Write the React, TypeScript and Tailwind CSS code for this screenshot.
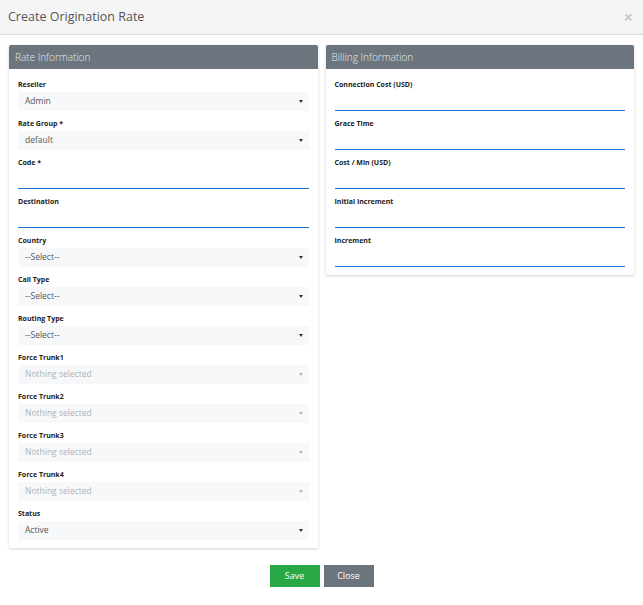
import React from "react";

const font = { fontFamily: '"Open Sans", "DejaVu Sans", sans-serif' };

function Caret({ light }: { light?: boolean }) {
  return (
    <span
      className={`inline-block w-0 h-0 border-l-[2.5px] border-r-[2.5px] border-t-[3px] border-l-transparent border-r-transparent ${
        light ? "border-t-[#b5b5b5]" : "border-t-[#333]"
      }`}
    />
  );
}

function SelectField({ label, value, disabled }: { label: string; value: string; disabled?: boolean }) {
  return (
    <div className="flex flex-col">
      <div className="h-[8px] flex items-center text-[7px] font-bold text-[#222] leading-none whitespace-nowrap">{label}</div>
      <div className="mt-[4px] h-[19px] bg-[#f7f8fa] flex items-center justify-between pl-[7px] pr-[6px]">
        <span className={`text-[8.5px] leading-none ${disabled ? "text-[#aeb3b9]" : "text-[#555]"}`}>{value}</span>
        <Caret light={disabled} />
      </div>
    </div>
  );
}

function InputField({ label }: { label: string }) {
  return (
    <div className="flex flex-col">
      <div className="h-[8px] flex items-center text-[7px] font-bold text-[#222] leading-none whitespace-nowrap">{label}</div>
      <div className="mt-[4px] h-[19px] border-b border-[#1e76d2]" />
    </div>
  );
}

function Panel({ title, children }: { title: string; children: React.ReactNode }) {
  return (
    <div className="bg-white rounded-[2px] shadow-[0_1px_3px_rgba(0,0,0,0.18)]">
      <div className="h-[24px] bg-[#6c757d] flex items-center px-[6px] text-[10px] font-light text-[#e6e8ea] rounded-t-[2px]">
        {title}
      </div>
      <div className="px-[9px] pt-[11px] pb-[8px] flex flex-col gap-[8px]">{children}</div>
    </div>
  );
}

export default function App() {
  return (
    <div className="w-[643px] h-[605px] bg-white" style={font}>
      <div className="h-[35px] bg-[#f5f5f5] border-b border-[#dcdcdc] flex items-center justify-between pl-[8px] pr-[10px]">
        <span className="text-[12.5px] text-[#555]">Create Origination Rate</span>
        <span className="text-[16px] font-bold text-[#c8c8c8] leading-none">×</span>
      </div>
      <div className="px-[9px] pt-[10px] grid grid-cols-2 gap-[8px] items-start">
        <Panel title="Rate Information">
          <SelectField label="Reseller" value="Admin" />
          <SelectField label="Rate Group *" value="default" />
          <InputField label="Code *" />
          <InputField label="Destination" />
          <SelectField label="Country" value="--Select--" />
          <SelectField label="Call Type" value="--Select--" />
          <SelectField label="Routing Type" value="--Select--" />
          <SelectField label="Force Trunk1" value="Nothing selected" disabled />
          <SelectField label="Force Trunk2" value="Nothing selected" disabled />
          <SelectField label="Force Trunk3" value="Nothing selected" disabled />
          <SelectField label="Force Trunk4" value="Nothing selected" disabled />
          <SelectField label="Status" value="Active" />
        </Panel>
        <Panel title="Billing Information">
          <InputField label="Connection Cost (USD)" />
          <InputField label="Grace Time" />
          <InputField label="Cost / Min (USD)" />
          <InputField label="Initial Increment" />
          <InputField label="Increment" />
        </Panel>
      </div>
      <div className="flex justify-center gap-[4px] mt-[17px]">
        <button className="w-[50px] h-[22px] bg-[#28a745] text-white text-[9px]">Save</button>
        <button className="w-[50px] h-[22px] bg-[#6c757d] text-white text-[9px]">Close</button>
      </div>
    </div>
  );
}
